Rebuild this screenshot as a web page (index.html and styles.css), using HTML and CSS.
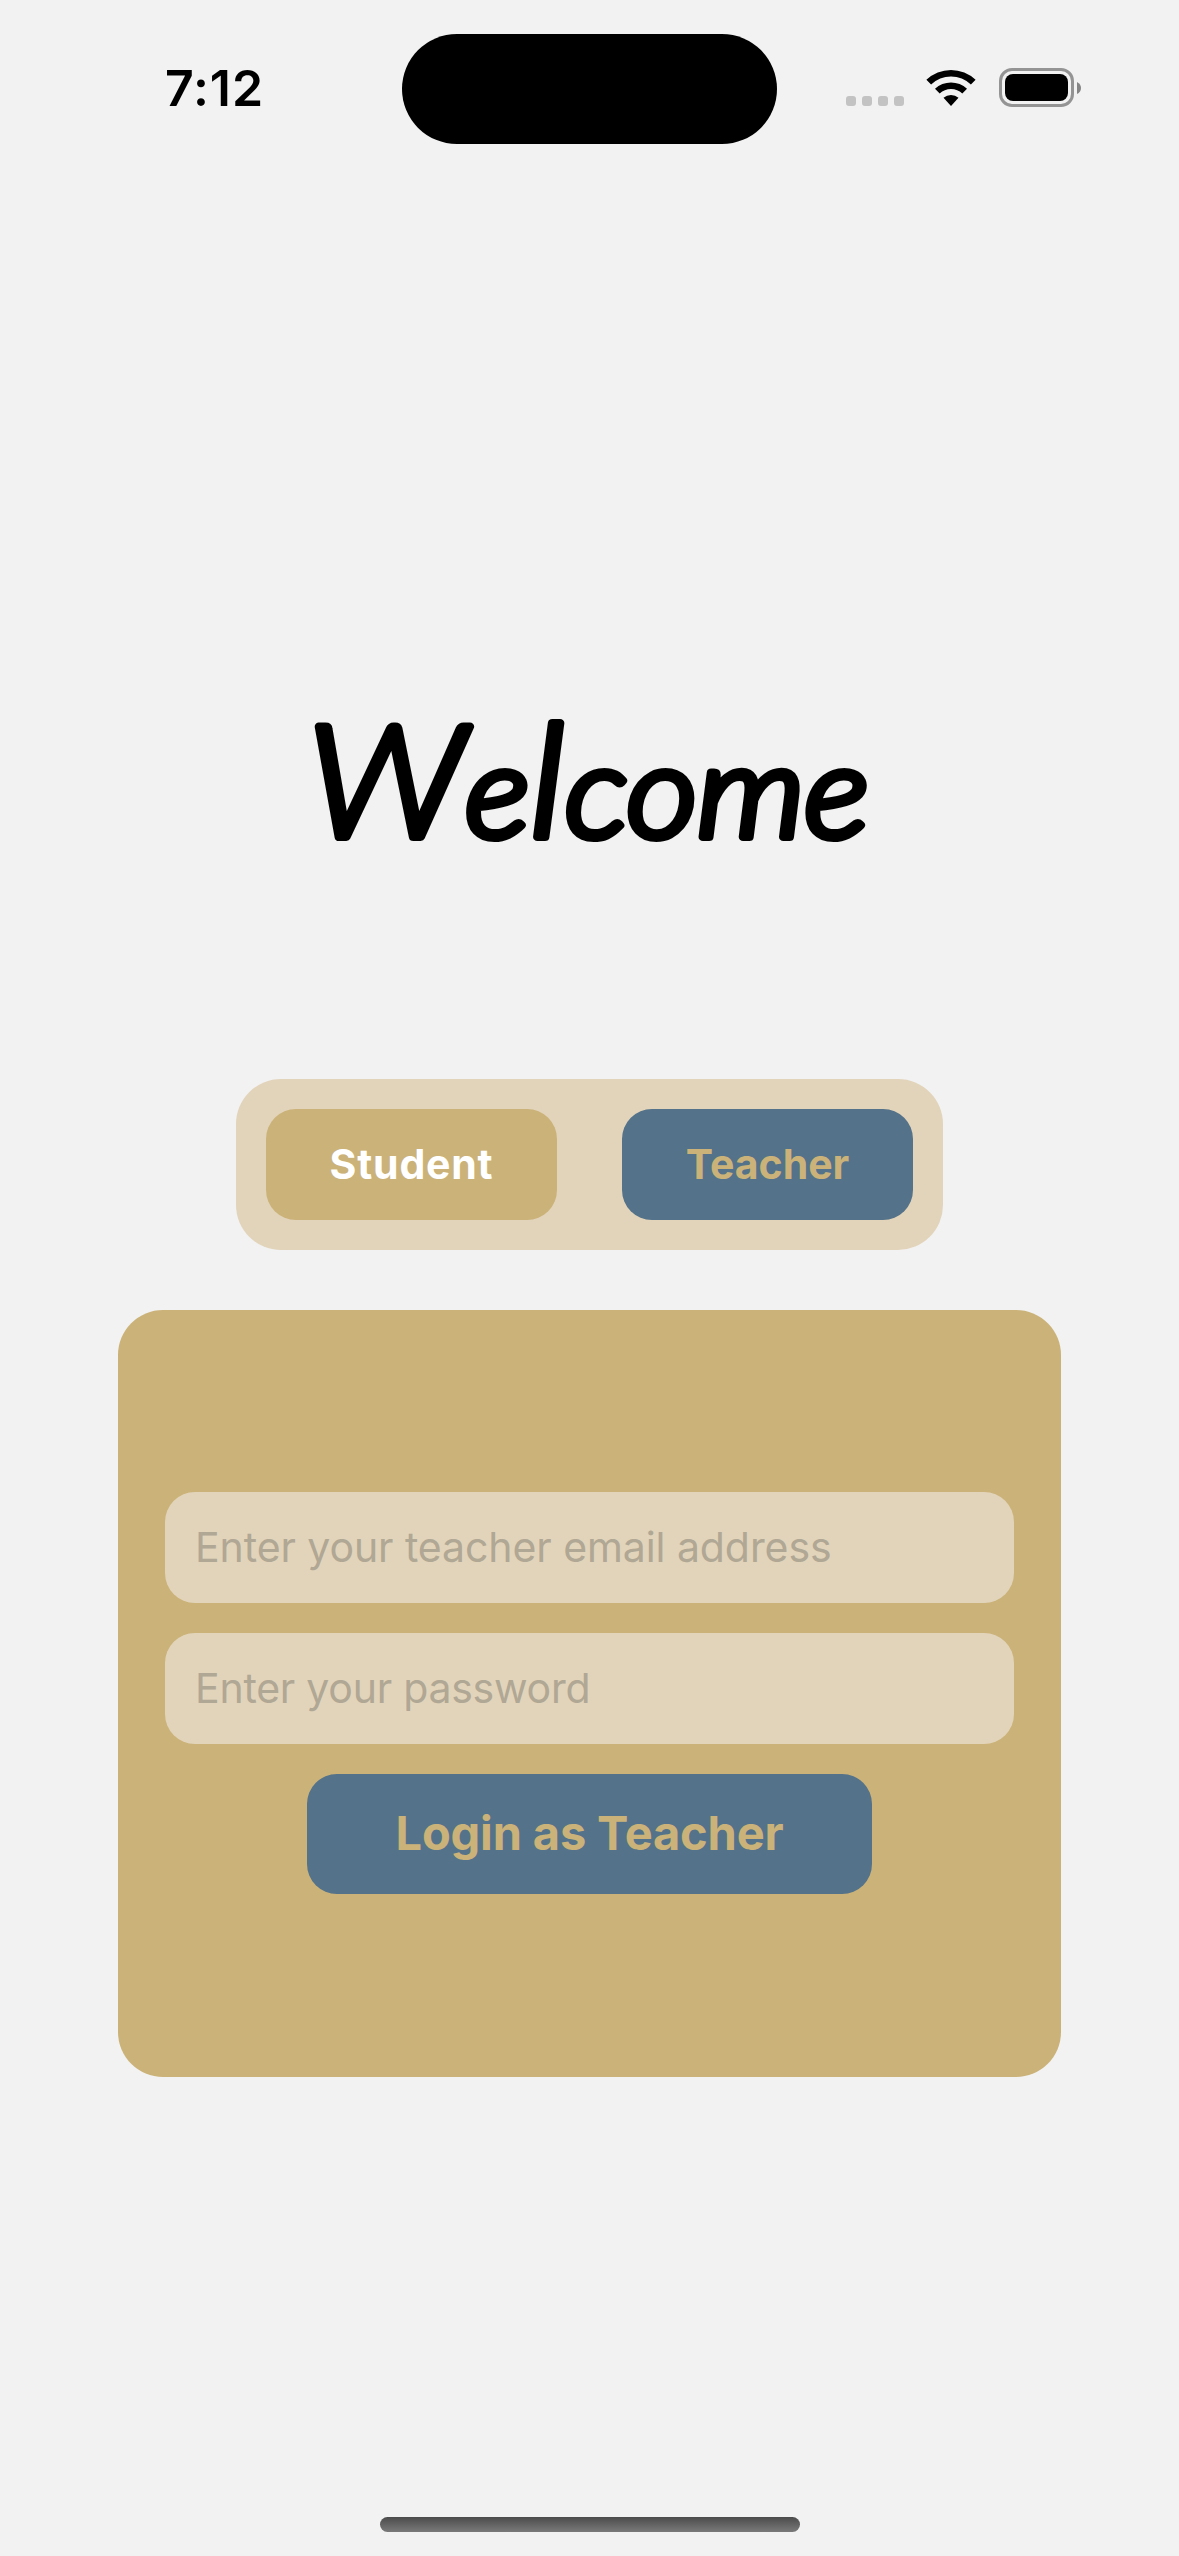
FILE: index.html
```html
<!DOCTYPE html>
<html lang="en">
<head>
<meta charset="utf-8">
<title>Welcome</title>
<link rel="stylesheet" href="styles.css">
</head>
<body>
<div class="screen">
  <header class="status">
    <div class="status-time">7:12</div>
    <div class="island"></div>
    <div class="status-icons">
      <div class="dots"><i></i><i></i><i></i><i></i></div>
      <svg class="wifi" viewBox="0 0 50 37" width="50" height="37" aria-hidden="true">
        <path d="M0.4 10.8A35.5 35.5 0 0 1 49.6 10.8L44.9 15.6A28.4 28.4 0 0 0 5.1 15.6Z"/>
        <path d="M9 19.7A23.4 23.4 0 0 1 41 19.7L36.3 24.5A16.4 16.4 0 0 0 13.7 24.5Z"/>
        <path d="M17.5 28.7A11.4 11.4 0 0 1 32.5 28.7L25 37Z"/>
      </svg>
      <div class="battery"><div class="battery-body"><div class="battery-level"></div></div><svg width="4" height="12" viewBox="0 0 4 12" aria-hidden="true"><path d="M0 0Q4 2 4 6Q4 10 0 12Z" fill="#858585"/></svg></div>
    </div>
  </header>

  <h1 class="title">
    <svg class="title-art" width="579" height="160" viewBox="300 700 579 160">
      <text class="title-text" x="307" y="837" textLength="562" lengthAdjust="spacingAndGlyphs"><tspan class="tall">W</tspan>e<tspan class="tall">l</tspan>come</text>
    </svg>
  </h1>

  <nav class="roles">
    <button class="role" type="button">Student</button>
    <button class="role role-active" type="button">Teacher</button>
  </nav>

  <form class="card">
    <input class="field" type="email" placeholder="Enter your teacher email address">
    <input class="field field-password" type="password" placeholder="Enter your password">
    <button class="login" type="button">Login as Teacher</button>
  </form>

  <div class="home-bar"></div>
</div>
</body>
</html>
```

FILE: styles.css
```css
* { box-sizing: border-box; }

body {
  margin: 0;
  background: #f2f2f2;
  font-family: Inter, "Liberation Sans", sans-serif;
}

button, input {
  margin: 0;
  border: 0;
  font-family: inherit;
}

.screen {
  display: flex;
  flex-direction: column;
  align-items: center;
  width: 1179px;
  height: 2556px;
  padding-bottom: 24px;
  background: #f2f2f2;
}

.status {
  display: grid;
  grid-template-columns: 402px 375px 402px;
  align-items: center;
  width: 100%;
  height: 177px;
}

.status-time {
  padding: 0 0 2px 165px;
  font-size: 50px;
  font-weight: 600;
  letter-spacing: 0.9px;
  line-height: 60px;
}

.island {
  height: 110px;
  margin-top: 1px;
  border-radius: 55px;
  background: #000;
}

.status-icons {
  display: flex;
  align-items: flex-end;
  height: 39px;
  margin-bottom: 2px;
  padding-left: 69px;
}

.dots {
  display: flex;
  gap: 6px;
  margin: 0 22px 1px 0;
}

.dots i {
  width: 10px;
  height: 10px;
  border-radius: 3px;
  background: #c3c3c3;
}

.wifi { margin: 0 23px 1px 0; }

.battery {
  display: flex;
  align-items: center;
  gap: 3px;
}

.battery-body {
  width: 75px;
  height: 39px;
  padding: 3px;
  border: 3px solid #949494;
  border-radius: 13px;
}

.battery-level {
  height: 27px;
  border-radius: 8px;
  background: #000;
}

.title {
  display: flex;
  margin: 523px 0 219px;
}

.title-art { overflow: visible; }

.title-text {
  font-family: Lato, sans-serif;
  font-size: 128px;
  font-weight: 300;
  font-style: italic;
  fill: #000;
  stroke: #000;
  stroke-width: 8px;
  stroke-linejoin: round;
}

.tall { font-size: 157px; }

.roles {
  display: flex;
  justify-content: space-between;
  width: 707px;
  height: 171px;
  padding: 30px;
  border-radius: 45px;
  background: #e2d4ba;
}

.role {
  width: 291px;
  height: 111px;
  padding: 0 0 2px;
  border-radius: 30px;
  background: #cbb279;
  color: #fff;
  font-size: 41px;
  font-weight: 700;
  letter-spacing: 0.8px;
}

.role-active {
  background: #547289;
  color: #cbb279;
  letter-spacing: 0;
}

.card {
  display: flex;
  flex-direction: column;
  align-items: center;
  justify-content: center;
  gap: 30px;
  width: 943px;
  height: 767px;
  margin-top: 60px;
  padding-bottom: 1px;
  border-radius: 45px;
  background: #cbb279;
}

.field {
  width: 849px;
  height: 111px;
  padding: 0 30px 2px;
  border-radius: 30px;
  background: #e2d4ba;
  font-size: 41px;
  letter-spacing: -0.08px;
}

.field-password { letter-spacing: -0.24px; }

.field::placeholder {
  color: #b0a794;
  opacity: 1;
}

.login {
  width: 565px;
  height: 120px;
  padding: 0 0 4px;
  border-radius: 30px;
  background: #547289;
  color: #cbb279;
  font-size: 47px;
  font-weight: 700;
  letter-spacing: -0.15px;
}

.home-bar {
  width: 420px;
  height: 15px;
  margin-top: auto;
  border-radius: 8px;
  background: linear-gradient(#4b4b4b, #7a7a7a);
}
```
